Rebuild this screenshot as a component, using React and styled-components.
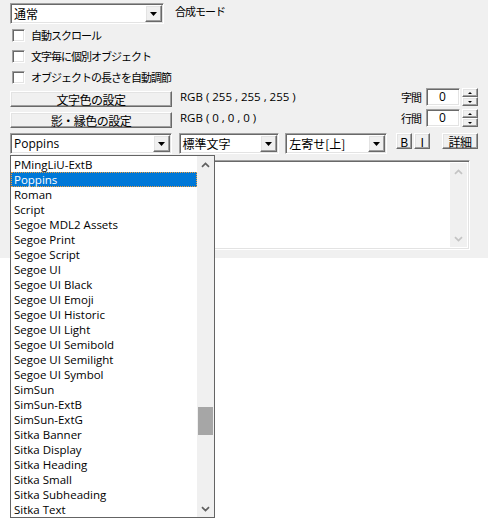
import styled, { createGlobalStyle } from "styled-components";

const JP = `"Noto Sans CJK JP", "Noto Sans", sans-serif`;
const UI = `"Open Sans", "Noto Sans CJK JP", sans-serif`;

const GlobalStyle = createGlobalStyle`
  body {
    margin: 0;
    background: #ffffff;
    font-family: ${UI};
    color: #000;
  }
`;

const fonts = [
  "PMingLiU-ExtB",
  "Poppins",
  "Roman",
  "Script",
  "Segoe MDL2 Assets",
  "Segoe Print",
  "Segoe Script",
  "Segoe UI",
  "Segoe UI Black",
  "Segoe UI Emoji",
  "Segoe UI Historic",
  "Segoe UI Light",
  "Segoe UI Semibold",
  "Segoe UI Semilight",
  "Segoe UI Symbol",
  "SimSun",
  "SimSun-ExtB",
  "SimSun-ExtG",
  "Sitka Banner",
  "Sitka Display",
  "Sitka Heading",
  "Sitka Small",
  "Sitka Subheading",
  "Sitka Text",
];

const Arrow = () => (
  <svg width="7" height="4" viewBox="0 0 7 4">
    <path d="M0 0H7L3.5 4Z" fill="#000" />
  </svg>
);

const Chevron = ({ down, color = "#606060" }) => (
  <svg width="9" height="6" viewBox="0 0 9 6">
    <path
      d={down ? "M1 1.2L4.5 4.6L8 1.2" : "M1 4.8L4.5 1.4L8 4.8"}
      fill="none"
      stroke={color}
      strokeWidth="1.7"
    />
  </svg>
);

const ComboBox = ({ width, text, font }) => (
  <Combo $width={width}>
    <ComboText $font={font}>{text}</ComboText>
    <DropButton>
      <Arrow />
    </DropButton>
  </Combo>
);

const App = () => {
  return (
    <Page>
      <GlobalStyle />
      <Window>
        <Row>
          <ComboBox width={154} text="通常" font={JP} />
          <Caption>合成モード</Caption>
        </Row>

        <Checks>
          <CheckRow>
            <CheckBox />
            <Caption>自動スクロール</Caption>
          </CheckRow>
          <CheckRow>
            <CheckBox />
            <Caption>文字毎に個別オブジェクト</Caption>
          </CheckRow>
          <CheckRow>
            <CheckBox />
            <Caption>オブジェクトの長さを自動調節</Caption>
          </CheckRow>
        </Checks>

        <Settings>
          <SettingRow>
            <PushButton $width={162}>文字色の設定</PushButton>
            <ColorValue>RGB ( 255 , 255 , 255 )</ColorValue>
            <SpinGroup>
              <Caption>字間</Caption>
              <NumberField>0</NumberField>
              <Spinner>
                <SpinHalf><SpinTip /></SpinHalf>
                <SpinHalf><SpinTip $down /></SpinHalf>
              </Spinner>
            </SpinGroup>
          </SettingRow>
          <SettingRow>
            <PushButton $width={162}>影・縁色の設定</PushButton>
            <ColorValue>RGB ( 0 , 0 , 0 )</ColorValue>
            <SpinGroup>
              <Caption>行間</Caption>
              <NumberField>0</NumberField>
              <Spinner>
                <SpinHalf><SpinTip /></SpinHalf>
                <SpinHalf><SpinTip $down /></SpinHalf>
              </Spinner>
            </SpinGroup>
          </SettingRow>
        </Settings>

        <FontRow>
          <ComboBox width={162} text="Poppins" font={UI} />
          <ComboBox width={101} text="標準文字" font={JP} />
          <ComboBox width={102} text="左寄せ[上]" font={JP} />
          <StyleButtons>
            <PushButton $width={16}>B</PushButton>
            <PushButton $width={16}>I</PushButton>
            <PushButton $width={36} $gap={10}>詳細</PushButton>
          </StyleButtons>
        </FontRow>

        <TextPane>
          <Editor />
          <ScrollTrack>
            <ArrowCell><Chevron color="#c4c4c4" /></ArrowCell>
            <ArrowCell><Chevron down color="#c4c4c4" /></ArrowCell>
          </ScrollTrack>
        </TextPane>

        <DropList>
          <Items>
            {fonts.map((name) => (
              <Item key={name} $selected={name === "Poppins"}>
                {name}
              </Item>
            ))}
          </Items>
          <ListScroll>
            <ArrowCell><Chevron /></ArrowCell>
            <Thumb />
            <ArrowCell><Chevron down /></ArrowCell>
          </ListScroll>
        </DropList>
      </Window>
    </Page>
  );
};

export default App;

const sunken = `
  border: 1px solid;
  border-color: #a0a0a0 #ffffff #ffffff #a0a0a0;
  box-shadow: inset 1px 1px 0 #696969, inset -1px -1px 0 #e3e3e3;
`;

const raised = `
  border: 1px solid;
  border-color: #ffffff #696969 #696969 #ffffff;
  box-shadow: inset -1px -1px 0 #a0a0a0, inset 1px 1px 0 #e3e3e3;
  background: #f0f0f0;
`;

const Page = styled.div`
  width: 488px;
  height: 518px;
  overflow: hidden;
`;

const Window = styled.div`
  position: relative;
  box-sizing: border-box;
  width: 488px;
  height: 258px;
  padding: 3px 10px 0 10px;
  background: #f0f0f0;
`;

const Row = styled.div`
  display: flex;
  align-items: flex-start;
  height: 21px;

  & > span {
    margin: 2px 0 0 11px;
  }
`;

const Caption = styled.span`
  font-family: ${JP};
  font-size: 11px;
  letter-spacing: -1px;
  line-height: 13px;
  white-space: nowrap;
`;

const Combo = styled.div`
  box-sizing: border-box;
  position: relative;
  display: flex;
  align-items: center;
  width: ${(p) => p.$width}px;
  height: 21px;
  background: #ffffff;
  ${sunken}
`;

const ComboText = styled.span`
  padding-left: 3px;
  font-family: ${(p) => p.$font};
  font-size: 12px;
  line-height: 15px;
  white-space: nowrap;
`;

const DropButton = styled.div`
  box-sizing: border-box;
  position: absolute;
  top: 1px;
  right: 1px;
  bottom: 1px;
  width: 17px;
  display: flex;
  align-items: center;
  justify-content: center;
  ${raised}
`;

const Checks = styled.div`
  display: flex;
  flex-direction: column;
  gap: 8px;
  margin-top: 5px;
`;

const CheckRow = styled.div`
  display: flex;
  align-items: center;
  gap: 6px;
  height: 13px;
  margin-left: 2px;
`;

const CheckBox = styled.div`
  box-sizing: border-box;
  width: 13px;
  height: 13px;
  background: #ffffff;
  ${sunken}
`;

const Settings = styled.div`
  display: flex;
  flex-direction: column;
  gap: 2px;
  margin-top: 4px;
`;

const SettingRow = styled.div`
  display: flex;
  align-items: flex-end;
  height: 19px;
`;

const PushButton = styled.div`
  box-sizing: border-box;
  display: flex;
  align-items: center;
  justify-content: center;
  width: ${(p) => p.$width}px;
  height: 16px;
  margin-left: ${(p) => p.$gap || 0}px;
  font-family: ${JP};
  font-size: 12px;
  letter-spacing: -0.5px;
  ${raised}
`;

const ColorValue = styled.span`
  margin: 0 0 2px 8px;
  font-family: ${UI};
  font-size: 11.5px;
  white-space: nowrap;
  align-self: center;
`;

const SpinGroup = styled.div`
  display: flex;
  align-items: center;
  align-self: flex-start;
  margin-left: auto;
  height: 18px;

  & > span {
    margin-right: 5px;
  }
`;

const NumberField = styled.div`
  box-sizing: border-box;
  width: 34px;
  height: 18px;
  padding-left: 12px;
  background: #ffffff;
  font-family: ${UI};
  font-size: 12px;
  line-height: 16px;
  ${sunken}
`;

const Spinner = styled.div`
  display: flex;
  flex-direction: column;
  width: 16px;
  height: 18px;
  margin-left: 2px;
`;

const SpinHalf = styled.div`
  box-sizing: border-box;
  flex: 1;
  display: flex;
  align-items: center;
  justify-content: center;
  ${raised}
`;

const SpinTip = styled.div`
  width: 0;
  height: 0;
  border-left: 2px solid transparent;
  border-right: 2px solid transparent;
  ${(p) =>
    p.$down ? "border-top: 2px solid #000;" : "border-bottom: 2px solid #000;"}
`;

const FontRow = styled.div`
  display: flex;
  align-items: flex-start;
  gap: 6px;
  margin-top: 5px;
  height: 21px;

  & > div:nth-child(2) {
    margin-left: 1px;
  }
`;

const StyleButtons = styled.div`
  display: flex;
  gap: 2px;
  margin-left: 3px;
`;

const TextPane = styled.div`
  box-sizing: border-box;
  display: flex;
  width: 460px;
  height: 90px;
  margin-top: 6px;
  ${sunken}
  padding: 2px;
  background: #ffffff;
`;

const Editor = styled.div`
  flex: 1;
`;

const ScrollTrack = styled.div`
  display: flex;
  flex-direction: column;
  justify-content: space-between;
  width: 17px;
  background: #f0f0f0;
`;

const ArrowCell = styled.div`
  display: flex;
  align-items: center;
  justify-content: center;
  height: 17px;
`;

const DropList = styled.div`
  position: absolute;
  left: 10px;
  top: 155px;
  box-sizing: border-box;
  display: flex;
  width: 205px;
  height: 363px;
  border: 1px solid #646464;
  background: #ffffff;
  z-index: 2;
`;

const Items = styled.div`
  flex: 1;
  padding-top: 1px;
`;

const Item = styled.div`
  box-sizing: border-box;
  height: 15px;
  padding-left: 2px;
  font-family: ${UI};
  font-size: 11.5px;
  line-height: 13px;
  white-space: nowrap;
  border: 1px dotted ${(p) => (p.$selected ? "#f0a040" : "transparent")};
  background: ${(p) => (p.$selected ? "#0078d7" : "transparent")};
  color: ${(p) => (p.$selected ? "#ffffff" : "#000000")};
`;

const ListScroll = styled.div`
  display: flex;
  flex-direction: column;
  width: 17px;
  background: #f0f0f0;

  & > div:last-child {
    margin-top: auto;
  }
`;

const Thumb = styled.div`
  width: 15px;
  height: 28px;
  margin: 234px 0 0 1px;
  background: #a6a6a6;
`;
